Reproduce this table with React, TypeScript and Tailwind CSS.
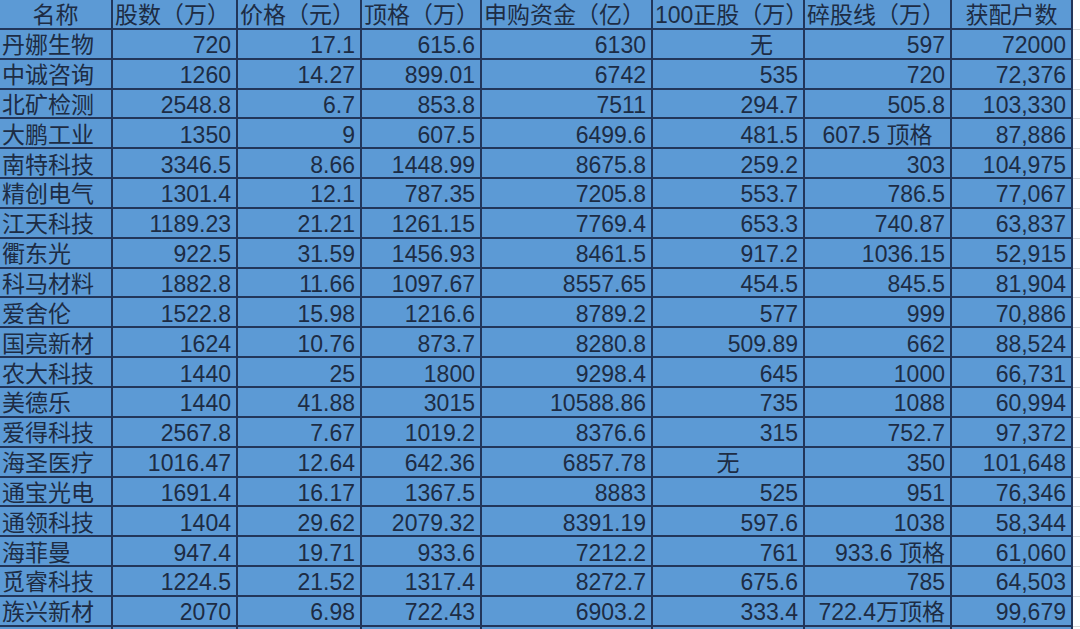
import React from "react";

type Align = "l" | "c" | "r";

const headers: [string, Align][] = [
  ["名称", "c"],
  ["股数（万）", "l"],
  ["价格（元）", "l"],
  ["顶格（万）", "l"],
  ["申购资金（亿）", "l"],
  ["100正股（万）", "l"],
  ["碎股线（万）", "l"],
  ["获配户数", "c"],
];

// "^" = centred cell, "*" = right with wide padding (as typed in the sheet)
const rows: string[][] = [
  ["丹娜生物", "720", "17.1", "615.6", "6130", "无*", "597", "72000"],
  ["中诚咨询", "1260", "14.27", "899.01", "6742", "535", "720", "72,376"],
  ["北矿检测", "2548.8", "6.7", "853.8", "7511", "294.7", "505.8", "103,330"],
  ["大鹏工业", "1350", "9", "607.5", "6499.6", "481.5", "607.5 顶格^", "87,886"],
  ["南特科技", "3346.5", "8.66", "1448.99", "8675.8", "259.2", "303", "104,975"],
  ["精创电气", "1301.4", "12.1", "787.35", "7205.8", "553.7", "786.5", "77,067"],
  ["江天科技", "1189.23", "21.21", "1261.15", "7769.4", "653.3", "740.87", "63,837"],
  ["衢东光", "922.5", "31.59", "1456.93", "8461.5", "917.2", "1036.15", "52,915"],
  ["科马材料", "1882.8", "11.66", "1097.67", "8557.65", "454.5", "845.5", "81,904"],
  ["爱舍伦", "1522.8", "15.98", "1216.6", "8789.2", "577", "999", "70,886"],
  ["国亮新材", "1624", "10.76", "873.7", "8280.8", "509.89", "662", "88,524"],
  ["农大科技", "1440", "25", "1800", "9298.4", "645", "1000", "66,731"],
  ["美德乐", "1440", "41.88", "3015", "10588.86", "735", "1088", "60,994"],
  ["爱得科技", "2567.8", "7.67", "1019.2", "8376.6", "315", "752.7", "97,372"],
  ["海圣医疗", "1016.47", "12.64", "642.36", "6857.78", "无^", "350", "101,648"],
  ["通宝光电", "1691.4", "16.17", "1367.5", "8883", "525", "951", "76,346"],
  ["通领科技", "1404", "29.62", "2079.32", "8391.19", "597.6", "1038", "58,344"],
  ["海菲曼", "947.4", "19.71", "933.6", "7212.2", "761", "933.6 顶格", "61,060"],
  ["觅睿科技", "1224.5", "21.52", "1317.4", "8272.7", "675.6", "785", "64,503"],
  ["族兴新材", "2070", "6.98", "722.43", "6903.2", "333.4", "722.4万顶格", "99,679"],
];

const cellBase =
  "h-[29.85px] flex items-center pt-[4px] border-r-2 border-b-2 border-[#22365a] whitespace-nowrap overflow-visible leading-none";

function Cell({ text, align }: { text: string; align: Align }) {
  const justify =
    align === "c" ? "justify-center" : align === "r" ? "justify-end pr-[5px]" : "justify-start pl-[2px]";
  return <div className={`${cellBase} ${justify}`}>{text}</div>;
}

function DataCell({ raw, col }: { raw: string; col: number }) {
  if (col === 0) return <Cell text={raw} align="l" />;
  if (raw.endsWith("^")) return <Cell text={raw.slice(0, -1)} align="c" />;
  if (raw.endsWith("*"))
    return <div className={`${cellBase} justify-end pr-[30px]`}>{raw.slice(0, -1)}</div>;
  return <Cell text={raw} align="r" />;
}

function Filler() {
  return <div className="h-[29.85px] bg-white border-b border-[#dcdcdc]" />;
}

export default function App() {
  return (
    <main className="w-[1080px] h-[629px] overflow-hidden bg-white">
      <div
        className="grid grid-cols-[113px_125px_124px_120px_171px_152px_147px_121px_7px] bg-[#5c9ad5] text-[#1d2c44] text-[23px]"
        style={{ fontFamily: '"Liberation Sans", "Noto Sans CJK SC", sans-serif' }}
      >
        {headers.map(([h, a]) => (
          <Cell key={h} text={h} align={a} />
        ))}
        <Filler />
        {rows.map((r, i) => (
          <React.Fragment key={i}>
            {r.map((v, j) => (
              <DataCell key={j} raw={v} col={j} />
            ))}
            <Filler />
          </React.Fragment>
        ))}
        {headers.map((_, j) => (
          <div key={"e" + j} className={cellBase} />
        ))}
        <Filler />
      </div>
    </main>
  );
}
